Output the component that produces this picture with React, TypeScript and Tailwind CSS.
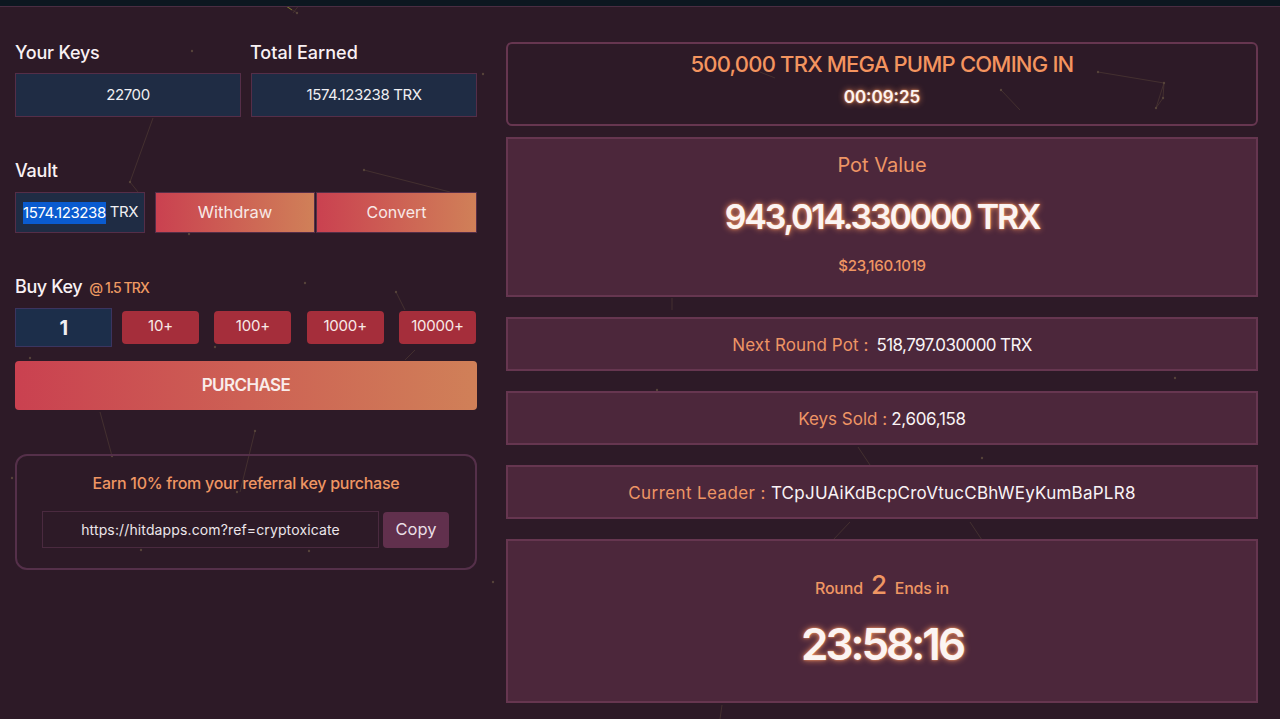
import React from "react";

const glow = "[text-shadow:0_0_6px_#f4925f,0_0_2px_#f4925f]";
const grad = "bg-[linear-gradient(90deg,#ca4150,#d08058)]";

function Label({ children, className = "" }: { children: React.ReactNode; className?: string }) {
  return <div className={`text-[18px] leading-[24px] font-medium tracking-[-0.2px] text-[#f9f1f4] ${className}`}>{children}</div>;
}

function Field({ children, className = "" }: { children: React.ReactNode; className?: string }) {
  return (
    <div className={`flex items-center justify-center bg-[#1f2c44] border border-[#552e48] text-[#f0eff2] text-[15px] tracking-[-0.4px] ${className}`}>
      {children}
    </div>
  );
}

function Stat({ label, value, gap, labelClass = "", valueClass = "" }: { label: string; value: string; gap: string; labelClass?: string; valueClass?: string }) {
  return (
    <div className="h-[54px] flex items-center justify-center bg-[#4c273b] border-2 border-[#663650] pt-[3px] text-[17px]">
      <span className={`text-[#ee9565] ${labelClass}`}>{label}</span>
      <span className={`${gap} text-[#f9f3f5] ${valueClass}`}>{value}</span>
    </div>
  );
}

function Decor() {
  const lines = [
    [277, 0, 297, 13], [293, 13, 303, 0], [153, 118, 130, 182], [130, 182, 138, 192], [364, 170, 450, 192],
    [396, 292, 405, 310], [100, 412, 112, 456], [255, 431, 240, 492], [415, 350, 405, 360], [1098, 72, 1164, 83], [1164, 83, 1156, 108], [1164, 83, 1163, 98],
    [1156, 108, 1163, 98], [1001, 90, 1020, 110], [760, 72, 775, 78], [672, 298, 672, 310], [858, 447, 870, 465], [850, 522, 833, 540], [970, 522, 982, 540], [722, 705, 720, 719],
  ];
  const dots = [
    [297, 13], [192, 51], [483, 74], [130, 182], [364, 170], [189, 234], [305, 283], [396, 292], [30, 358], [215, 347],
    [112, 456], [255, 431], [12, 478], [237, 492], [141, 550], [309, 551], [493, 582], [1098, 72], [1164, 83], [1156, 108], [1163, 98], [1001, 90], [1175, 378], [657, 390], [982, 458],
  ];
  return (
    <svg className="absolute inset-0 pointer-events-none" width="1280" height="719">
      {lines.map((l, i) => (
        <line key={i} x1={l[0]} y1={l[1]} x2={l[2]} y2={l[3]} stroke="#4d3a33" strokeWidth="0.7" />
      ))}
      <line x1="277" y1="0" x2="292" y2="10" stroke="#7d7d2c" strokeWidth="1" />
      {dots.map((d, i) => (
        <circle key={i} cx={d[0]} cy={d[1]} r="1.2" fill="#55433a" />
      ))}
    </svg>
  );
}

export default function App() {
  return (
    <div className="relative h-[719px] w-[1280px] overflow-hidden bg-[#2d1a27] font-['Inter','Open_Sans',sans-serif]">
      <Decor />
      <div className="relative h-[7px] bg-[#0c1720] border-b border-[#4a2d42]" />
      <div className="relative flex gap-[29px] pl-[15px] pt-[34px]">
        <div className="w-[462px] shrink-0">
          <div className="flex gap-[10px]">
            <div className="flex-1"><Label>Your Keys</Label></div>
            <div className="flex-1"><Label className="!tracking-[0px] -ml-[1px]">Total Earned</Label></div>
          </div>
          <div className="mt-[8px] flex gap-[10px]">
            <Field className="h-[44px] flex-1">22700</Field>
            <Field className="h-[44px] flex-1">1574.123238 TRX</Field>
          </div>

          <Label className="mt-[42px]">Vault</Label>
          <div className="mt-[9px] flex">
            <Field className="h-[41px] w-[130px] shrink-0 pl-[1px]">
              <span className="bg-[#0a5bcf] leading-[22px] text-white">1574.123238</span>
              <span>&nbsp;TRX</span>
            </Field>
            <button className={`ml-[10px] h-[41px] w-[160px] ${grad} border border-[#552e48] pb-[1px] text-[16.5px] text-[#f8e9e7]`}>Withdraw</button>
            <button className={`ml-[1px] h-[41px] w-[161px] ${grad} border border-[#552e48] pb-[1px] text-[16px] text-[#f8e9e7]`}>Convert</button>
          </div>

          <div className="mt-[42px] flex items-baseline">
            <Label className="!tracking-[-0.4px]">Buy Key</Label>
            <span className="ml-[7px] text-[14px] font-medium tracking-[-0.9px] text-[#ef9a63]">@ 1.5 TRX</span>
          </div>
          <div className="mt-[9px] flex items-center">
            <Field className="h-[39px] w-[97px] !border-[#3b3560] font-bold !text-[20px] !bg-[#1c2e4a]">1</Field>
            <div className="ml-[10px] mr-[1px] flex flex-1 justify-between">
              {["10+", "100+", "1000+", "10000+"].map((t) => (
                <button key={t} className="h-[33px] w-[77px] rounded-[4px] bg-[#a52e3b] pb-[2px] text-[15px] tracking-[-0.2px] text-[#f8e9e7]">{t}</button>
              ))}
            </div>
          </div>
          <button className={`mt-[14px] h-[49px] w-full rounded-[4px] ${grad} text-[17px] font-semibold tracking-[-0.6px] text-[#f9ecea]`}>PURCHASE</button>

          <div className="mt-[44px] h-[116px] rounded-[12px] border-2 border-[#55304a] px-[25px] pt-[15px]">
            <div className="text-center text-[16px] font-medium leading-[24px] tracking-[-0.27px] text-[#ef9663]">Earn 10% from your referral key purchase</div>
            <div className="mt-[16px] flex items-center">
              <div className="flex h-[37px] w-[337px] items-center justify-center border border-[#4a2a3f] text-[14px] tracking-[0.13px] text-[#ece6ea]">https://hitdapps.com?ref=cryptoxicate</div>
              <button className="ml-[4px] h-[36px] w-[66px] rounded-[4px] bg-[#61304d] text-[16.5px] text-[#eadfe5]">Copy</button>
            </div>
          </div>
        </div>

        <div className="mt-[1px] w-[752px] shrink-0">
          <div className="h-[84px] rounded-[6px] border-2 border-[#663650] text-center">
            <div className="mt-[5px] text-[22px] font-medium leading-[30px] tracking-[-0.8px] text-[#f4945f]">500,000 TRX MEGA PUMP COMING IN</div>
            <div className={`mt-[6px] text-[17px] font-semibold leading-[24px] text-[#fbf4f2] ${glow}`}>00:09:25</div>
          </div>
          <div className="mt-[11px] flex h-[160px] flex-col items-center border-2 border-[#663650] bg-[#4c273b]">
            <div className="mt-[12px] text-[20px] leading-[28px] text-[#ee9565]">Pot Value</div>
            <div className={`mt-[15px] text-[34px] font-semibold leading-[46px] tracking-[-2.2px] text-[#fbf4f2] ${glow}`}>943,014.330000 TRX</div>
            <div className="mt-[15px] text-[15px] font-medium leading-[22px] tracking-[-0.3px] text-[#ef9663]">$23,160.1019</div>
          </div>
          <div className="mt-[20px]"><Stat label="Next Round Pot :" value="518,797.030000 TRX" gap="ml-2" labelClass="tracking-[0.1px]" valueClass="tracking-[-0.6px]" /></div>
          <div className="mt-[20px]"><Stat label="Keys Sold :" value="2,606,158" gap="ml-1" valueClass="tracking-[-0.3px]" /></div>
          <div className="mt-[20px]"><Stat label="Current Leader :" value="TCpJUAiKdBcpCroVtucCBhWEyKumBaPLR8" gap="ml-[5px]" labelClass="tracking-[0.4px]" valueClass="tracking-[0.25px]" /></div>
          <div className="mt-[20px] flex h-[164px] flex-col items-center border-2 border-[#663650] bg-[#4c273b]">
            <div className="mt-[27px] flex items-baseline text-[16px] font-medium tracking-[-0.2px] text-[#ef9663]">
              <span>Round</span>
              <span className="mx-[8px] text-[26px] leading-[34px]">2</span>
              <span>Ends in</span>
            </div>
            <div className={`mt-[14px] text-[44px] font-semibold leading-[56px] tracking-[-3px] text-[#fbf4f2] ${glow}`}>23:58:16</div>
          </div>
        </div>
      </div>
    </div>
  );
}
